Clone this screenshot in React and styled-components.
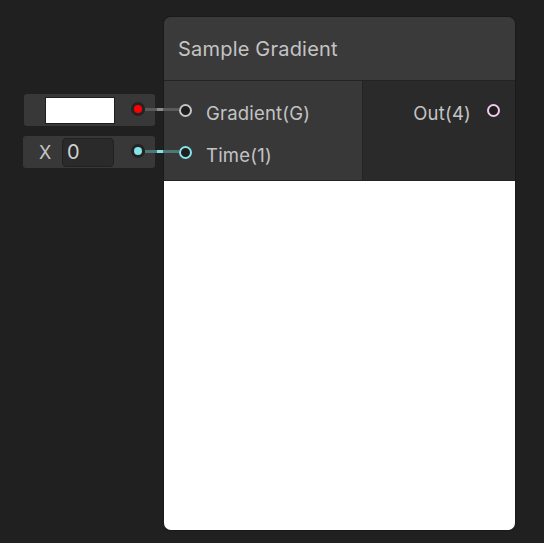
import React from "react";
import styled, { createGlobalStyle } from "styled-components";

const Global = createGlobalStyle`
  html, body { margin: 0; padding: 0; background: #202020; }
  body { font-family: Inter, "Noto Sans", sans-serif; color: #c4c4c4; }
`;

const Canvas = styled.div`
  width: 544px;
  height: 543px;
  box-sizing: border-box;
  padding: 17px 0 0 23px;
  display: flex;
  align-items: flex-start;
  overflow: hidden;
`;

const InputColumn = styled.div`
  margin-top: 77px;
  width: 141px;
  display: flex;
  flex-direction: column;
  gap: 10px;
  position: relative;
  z-index: 2;
`;

const FieldRow = styled.div`
  position: relative;
  height: 32px;
  display: flex;
  align-items: center;
`;

const FieldBox = styled.div`
  width: ${(p) => p.$w || 132}px;
  height: 32px;
  margin-left: ${(p) => p.$indent || 0}px;
  box-sizing: border-box;
  background: #383838;
  border-radius: 3px;
  display: flex;
  align-items: center;
  padding-left: ${(p) => p.$pad || 0}px;
  position: relative;
`;

const Swatch = styled.div`
  width: 70px;
  height: 27px;
  box-sizing: border-box;
  background: #ffffff;
  border: 1px solid #1e1e1e;
`;

const AxisLabel = styled.span`
  font-size: 18px;
  width: 39px;
  padding-left: 16px;
  box-sizing: border-box;
  color: #c4c4c4;
`;

const NumberInput = styled.div`
  width: 52px;
  height: 29px;
  box-sizing: border-box;
  background: #2a2a2a;
  border: 1px solid #212121;
  border-radius: 4px;
  font-size: 20px;
  padding-left: 4px;
  display: flex;
  align-items: center;
  color: #d2d2d2;
`;

const FieldPort = styled.div`
  position: absolute;
  left: 108px;
  top: 50%;
  width: 14px;
  height: 14px;
  margin-top: -8px;
  border-radius: 50%;
  background: #232323;
  display: flex;
  align-items: center;
  justify-content: center;
  &::after {
    content: "";
    width: 8px;
    height: 8px;
    border-radius: 50%;
    background: ${(p) => p.$color};
  }
`;

const Wire = styled.div`
  position: absolute;
  left: 122px;
  top: 50%;
  margin-top: -2px;
  width: 34px;
  height: 3px;
  background: ${(p) => p.$color};
  &::after {
    content: "";
    position: absolute;
    left: 12px;
    top: 0;
    width: 6px;
    height: 3px;
    background: ${(p) => p.$hi};
  }
`;

const Node = styled.div`
  width: 351px;
  height: 513px;
  border-radius: 7px;
  background: #393939;
  box-shadow: 0 0 0 1px #1a1a1a;
  overflow: hidden;
  display: flex;
  flex-direction: column;
  position: relative;
  z-index: 1;
`;

const Header = styled.div`
  height: 64px;
  flex: none;
  background: #3a3a3a;
  border-bottom: 1px solid #232323;
  display: flex;
  align-items: center;
  padding-left: 14px;
  padding-top: 1px;
  box-sizing: border-box;
  font-size: 20px;
  letter-spacing: 0.2px;
  color: #c4c4c4;
`;

const Ports = styled.div`
  display: flex;
  height: 99px;
  flex: none;
  border-bottom: 1px solid #232323;
`;

const Inputs = styled.div`
  width: 198px;
  background: #383838;
  border-right: 1px solid #232323;
  padding-top: 13px;
  display: flex;
  flex-direction: column;
  gap: 10px;
`;

const Outputs = styled.div`
  flex: 1;
  background: #2a2a2a;
  padding-top: 13px;
  display: flex;
  flex-direction: column;
  align-items: flex-end;
`;

const PortRow = styled.div`
  height: 32px;
  display: flex;
  align-items: center;
  flex-direction: ${(p) => (p.$out ? "row-reverse" : "row")};
  gap: ${(p) => (p.$out ? 16 : 14)}px;
  padding: ${(p) => (p.$out ? "0 15px 0 0" : "0 0 0 15px")};
  font-size: 18.5px;
  letter-spacing: 0.2px;
  color: #c4c4c4;
`;

const PortLabel = styled.span`
  padding-top: 6px;
`;

const PortCircle = styled.div`
  width: 13px;
  height: 13px;
  box-sizing: border-box;
  border-radius: 50%;
  border: 2px solid ${(p) => p.$color};
  background: #1e1e1e;
`;

const Preview = styled.div`
  flex: 1;
  background: #ffffff;
`;

export default function App() {
  return (
    <>
      <Global />
      <Canvas>
        <InputColumn>
          <FieldRow>
            <FieldBox $indent={1} $w={131} $pad={21}>
              <Swatch />
            </FieldBox>
            <FieldPort $color="#ff0000" />
            <Wire $color="#5a5a5a" $hi="#8a8a8a" />
          </FieldRow>
          <FieldRow>
            <FieldBox>
              <AxisLabel>X</AxisLabel>
              <NumberInput>0</NumberInput>
            </FieldBox>
            <FieldPort $color="#84e4e7" />
            <Wire $color="#4d7778" $hi="#84e4e7" />
          </FieldRow>
        </InputColumn>
        <Node>
          <Header>Sample Gradient</Header>
          <Ports>
            <Inputs>
              <PortRow>
                <PortCircle $color="#c4c4c4" />
                <PortLabel>Gradient(G)</PortLabel>
              </PortRow>
              <PortRow>
                <PortCircle $color="#84e4e7" />
                <PortLabel>Time(1)</PortLabel>
              </PortRow>
            </Inputs>
            <Outputs>
              <PortRow $out>
                <PortCircle $color="#f2c6ee" />
                <PortLabel>Out(4)</PortLabel>
              </PortRow>
            </Outputs>
          </Ports>
          <Preview />
        </Node>
      </Canvas>
    </>
  );
}
